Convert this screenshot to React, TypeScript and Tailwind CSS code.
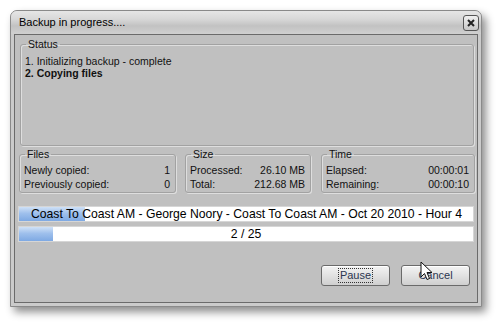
import React from "react";

function GroupBox({
  title,
  className,
  children,
}: {
  title: string;
  className?: string;
  children: React.ReactNode;
}) {
  return (
    <fieldset
      className={
        "rounded-[3px] border border-[#a2a2a2] shadow-[inset_1px_1px_0_#dedede,1px_1px_0_#dedede] " +
        (className ?? "")
      }
    >
      <legend className="ml-[5px] px-[2px] leading-[13px] text-[#111]">{title}</legend>
      {children}
    </fieldset>
  );
}

function Row({ label, value }: { label: string; value: string }) {
  return (
    <div className="flex h-[14px] items-center justify-between pl-[4px] pr-[5px]">
      <span>{label}</span>
      <span>{value}</span>
    </div>
  );
}

function Bar({ fill, children, center }: { fill: number; children: React.ReactNode; center?: boolean }) {
  return (
    <div className="relative h-[14px] w-[454px] bg-white shadow-[0_0_0_1px_#d6d6d6]">
      <div
        className="absolute left-0 top-0 h-full bg-[linear-gradient(to_bottom,#cfe1f7_0%,#9fc0ec_45%,#7ea9e3_100%)]"
        style={{ width: fill }}
      />
      <div
        className={
          "relative flex h-full items-center whitespace-nowrap text-[12.2px] leading-none text-black " +
          (center ? "justify-center" : "pl-[12px]")
        }
      >
        {children}
      </div>
    </div>
  );
}

function Btn({ children }: { children: React.ReactNode }) {
  return (
    <div className="flex h-[21px] w-[69px] items-center justify-center rounded-[3px] border border-[#6a6a6a] bg-[linear-gradient(to_bottom,#f3f3f3_0%,#e2e2e2_50%,#cfcfcf_100%)] text-[11px] text-[#2a3550] shadow-[inset_0_1px_0_#fff]">
      {children}
    </div>
  );
}

export default function App() {
  return (
    <div
      className="relative h-[325px] w-[500px] overflow-hidden bg-white pl-[10px] pt-[10px] text-[10.5px] text-[#111]"
      style={{ fontFamily: '"Liberation Sans", Arial, sans-serif' }}
    >
      <div className="flex h-[297px] w-[472px] flex-col rounded-t-[7px] border border-[#8a8a8a] bg-[#cbcbcb] shadow-[4px_5px_8px_rgba(0,0,0,0.45)]">
        {/* title bar */}
        <div className="flex h-[23px] items-center justify-between rounded-t-[6px] bg-[linear-gradient(to_bottom,#e6e6e6_0%,#d8d8d8_35%,#c2c2c2_65%,#d0d0d0_100%)] pl-[8px] pr-[2px]">
          <span className="text-[11px] text-black">Backup in progress....</span>
          <div className="flex h-[16px] w-[16px] items-center justify-center rounded-[3px] border border-[#555] bg-[linear-gradient(to_bottom,#f0f0f0,#c6c6c6)]">
            <svg width="10" height="10" viewBox="0 0 10 10">
              <path d="M2 2 L8 8 M8 2 L2 8" stroke="#222" strokeWidth="2" />
            </svg>
          </div>
        </div>

        {/* client area */}
        <div className="mx-[3px] mb-[3px] flex flex-1 flex-col border border-[#6b6b6b] bg-[#c0c0c0] pl-[4px] pt-[3px]">
          <GroupBox title="Status" className="ml-[1px] h-[108px] w-[454px]">
            <div className="pl-[4px] pt-[4px] leading-[12px]">
              <div>1. Initializing backup - complete</div>
              <div className="font-bold">2. Copying files</div>
            </div>
          </GroupBox>

          <div className="mt-[2px] flex">
            <GroupBox title="Files" className="h-[45px] w-[157px]">
              <div className="pt-[3px]">
                <Row label="Newly copied:" value="1" />
                <Row label="Previously copied:" value="0" />
              </div>
            </GroupBox>
            <GroupBox title="Size" className="ml-[9px] h-[45px] w-[126px]">
              <div className="pt-[3px]">
                <Row label="Processed:" value="26.10 MB" />
                <Row label="Total:" value="212.68 MB" />
              </div>
            </GroupBox>
            <GroupBox title="Time" className="ml-[10px] h-[45px] w-[154px]">
              <div className="pt-[3px]">
                <Row label="Elapsed:" value="00:00:01" />
                <Row label="Remaining:" value="00:00:10" />
              </div>
            </GroupBox>
          </div>

          <div className="mt-[14px]">
            <Bar fill={66}>Coast To Coast AM - George Noory - Coast To Coast AM - Oct 20 2010 - Hour 4</Bar>
          </div>
          <div className="mt-[6px]">
            <Bar fill={34} center>
              2 / 25
            </Bar>
          </div>

          <div className="mt-[24px] flex justify-end gap-[11px] pr-[7px]">
            <Btn>
              <span className="border border-dotted border-[#333] px-[1px] leading-[13px]">Pause</span>
            </Btn>
            <Btn>Cancel</Btn>
          </div>
        </div>
      </div>

      {/* mouse cursor */}
      <svg className="absolute left-[420px] top-[261px]" width="14" height="21" viewBox="0 0 14 21">
        <path
          d="M1 1 L1 16 L4.5 12.5 L7 18.5 L9.5 17.5 L7 11.5 L12 11.5 Z"
          fill="#fff"
          stroke="#111"
          strokeWidth="1"
          strokeLinejoin="round"
        />
      </svg>
    </div>
  );
}
